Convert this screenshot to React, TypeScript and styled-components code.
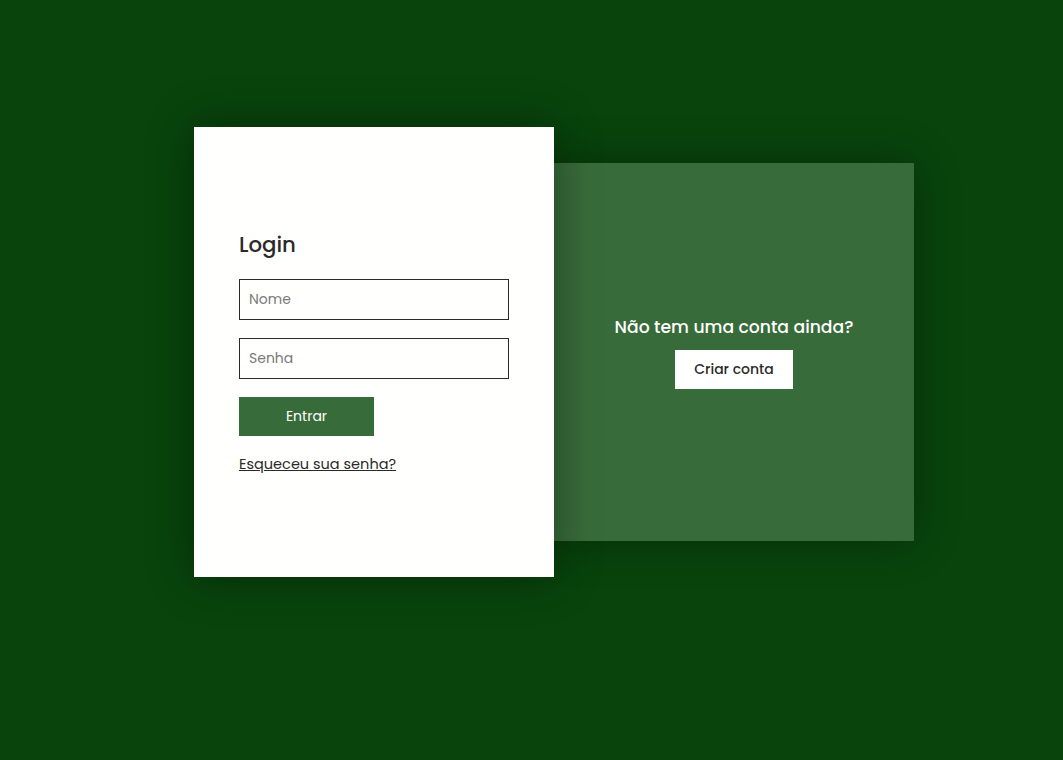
import React from "react";
import styled, { createGlobalStyle } from "styled-components";

const Global = createGlobalStyle`
  html, body { margin: 0; padding: 0; }
  body {
    background: #08440c;
    font-family: Poppins, "Open Sans", "Noto Sans", sans-serif;
    min-height: 760px;
  }
  * { box-sizing: border-box; }
`;

const Page = styled.main`
  min-height: 760px;
  padding: 127px 0 0 194px;
  display: flex;
  align-items: flex-start;
`;

const Stage = styled.div`
  display: flex;
  align-items: center;
`;

const LoginCard = styled.section`
  position: relative;
  z-index: 2;
  width: 360px;
  height: 450px;
  background: #fffffd;
  box-shadow: 0 0 42px rgba(0, 0, 0, 0.38);
  padding: 104px 45px 0 45px;
  display: flex;
  flex-direction: column;
`;

const Title = styled.h1`
  margin: 0 0 20px 0;
  font-size: 21.3px;
  font-weight: 500;
  color: #2a2a2a;
  line-height: 28px;
`;

const Input = styled.input`
  width: 270px;
  height: 41px;
  border: 1px solid #2a2a2a;
  background: #fffffd;
  padding: 0 9px;
  font-family: inherit;
  font-size: 14px;
  color: #2a2a2a;
  margin-bottom: ${(p: { $gap: number }) => p.$gap}px;
  outline: none;
  &::placeholder { color: #7a7a7a; }
`;

const PrimaryButton = styled.button`
  width: 135px;
  height: 39px;
  border: none;
  background: #386b3a;
  color: #ffffff;
  font-family: inherit;
  font-size: 14px;
  cursor: pointer;
  margin-bottom: 18px;
`;

const ForgotLink = styled.a`
  font-size: 14.5px;
  color: #2a2a2a;
  text-decoration: underline;
  line-height: 20px;
  align-self: flex-start;
`;

const SignupPanel = styled.section`
  position: relative;
  z-index: 1;
  width: 360px;
  height: 378px;
  background: #386b3a;
  box-shadow: 0 0 42px rgba(0, 0, 0, 0.3);
  display: flex;
  flex-direction: column;
  align-items: center;
  justify-content: center;
`;

const PanelText = styled.p`
  margin: 0 0 11px 0;
  font-size: 17.2px;
  font-weight: 500;
  color: #ffffff;
  line-height: 24px;
`;

const SecondaryButton = styled.button`
  width: 118px;
  height: 39px;
  border: none;
  background: #ffffff;
  color: #2a2a2a;
  font-family: inherit;
  font-size: 14px;
  font-weight: 500;
  cursor: pointer;
`;

export default function App() {
  return (
    <>
      <Global />
      <Page>
        <Stage>
          <LoginCard>
            <Title>Login</Title>
            <Input $gap={18} placeholder="Nome" />
            <Input $gap={18} placeholder="Senha" type="password" />
            <PrimaryButton>Entrar</PrimaryButton>
            <ForgotLink href="#">Esqueceu sua senha?</ForgotLink>
          </LoginCard>
          <SignupPanel>
            <PanelText>Não tem uma conta ainda?</PanelText>
            <SecondaryButton>Criar conta</SecondaryButton>
          </SignupPanel>
        </Stage>
      </Page>
    </>
  );
}
